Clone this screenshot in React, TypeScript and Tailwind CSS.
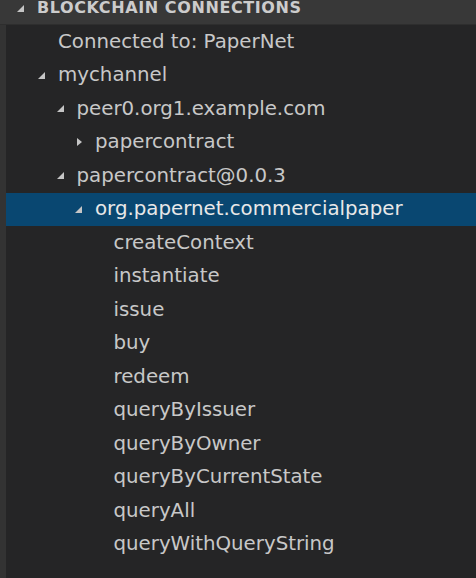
import React from "react"

type Row = {
  label: string
  indent: number
  twisty?: "open" | "closed"
  selected?: boolean
}

const ROWS: Row[] = [
  { label: "Connected to: PaperNet", indent: 0 },
  { label: "mychannel", indent: 0, twisty: "open" },
  { label: "peer0.org1.example.com", indent: 1, twisty: "open" },
  { label: "papercontract", indent: 2, twisty: "closed" },
  { label: "papercontract@0.0.3", indent: 1, twisty: "open" },
  { label: "org.papernet.commercialpaper", indent: 2, twisty: "open", selected: true },
  { label: "createContext", indent: 3 },
  { label: "instantiate", indent: 3 },
  { label: "issue", indent: 3 },
  { label: "buy", indent: 3 },
  { label: "redeem", indent: 3 },
  { label: "queryByIssuer", indent: 3 },
  { label: "queryByOwner", indent: 3 },
  { label: "queryByCurrentState", indent: 3 },
  { label: "queryAll", indent: 3 },
  { label: "queryWithQueryString", indent: 3 },
]

function Twisty({ kind }: { kind: "open" | "closed" }) {
  if (kind === "open") {
    return (
      <svg width="7" height="7" viewBox="0 0 7 7" className="block">
        <polygon points="7,0 7,7 0,7" fill="#c5c5c5" />
      </svg>
    )
  }
  return (
    <svg width="5" height="8" viewBox="0 0 5 8" className="block">
      <polygon points="0,0 5,4 0,8" fill="#c5c5c5" />
    </svg>
  )
}

export default function App() {
  return (
    <div
      className="w-[476px] h-[578px] overflow-hidden bg-[#252526] flex flex-col"
      style={{ fontFamily: '"DejaVu Sans", sans-serif' }}
    >
      {/* section header */}
      <div className="h-[25px] shrink-0 bg-[#383838] border-b border-[#2e2e2e] flex items-start pl-[17px] pt-[1px]">
        <div className="mt-[4px] mr-[13px]">
          <Twisty kind="open" />
        </div>
        <span className="text-[16px] leading-[14px] font-bold text-[#cccccc] tracking-[0.6px]">
          BLOCKCHAIN CONNECTIONS
        </span>
      </div>

      <div className="flex flex-1">
        <div className="w-[6px] bg-[#333333] shrink-0" />
        <div className="flex-1 flex flex-col">
          {ROWS.map((r) => (
            <div
              key={r.label}
              className={
                "h-[33.5px] flex items-center " +
                (r.selected ? "bg-[#094771] text-[#e8e8e8]" : "text-[#c8c8c8]")
              }
            >
              <div
                className="flex items-center justify-end shrink-0 pr-[13px]"
                style={{ width: 52 + r.indent * 18.5 }}
              >
                {r.twisty && <Twisty kind={r.twisty} />}
              </div>
              <span className="text-[19.8px] leading-none whitespace-nowrap">{r.label}</span>
            </div>
          ))}
        </div>
      </div>
    </div>
  )
}
